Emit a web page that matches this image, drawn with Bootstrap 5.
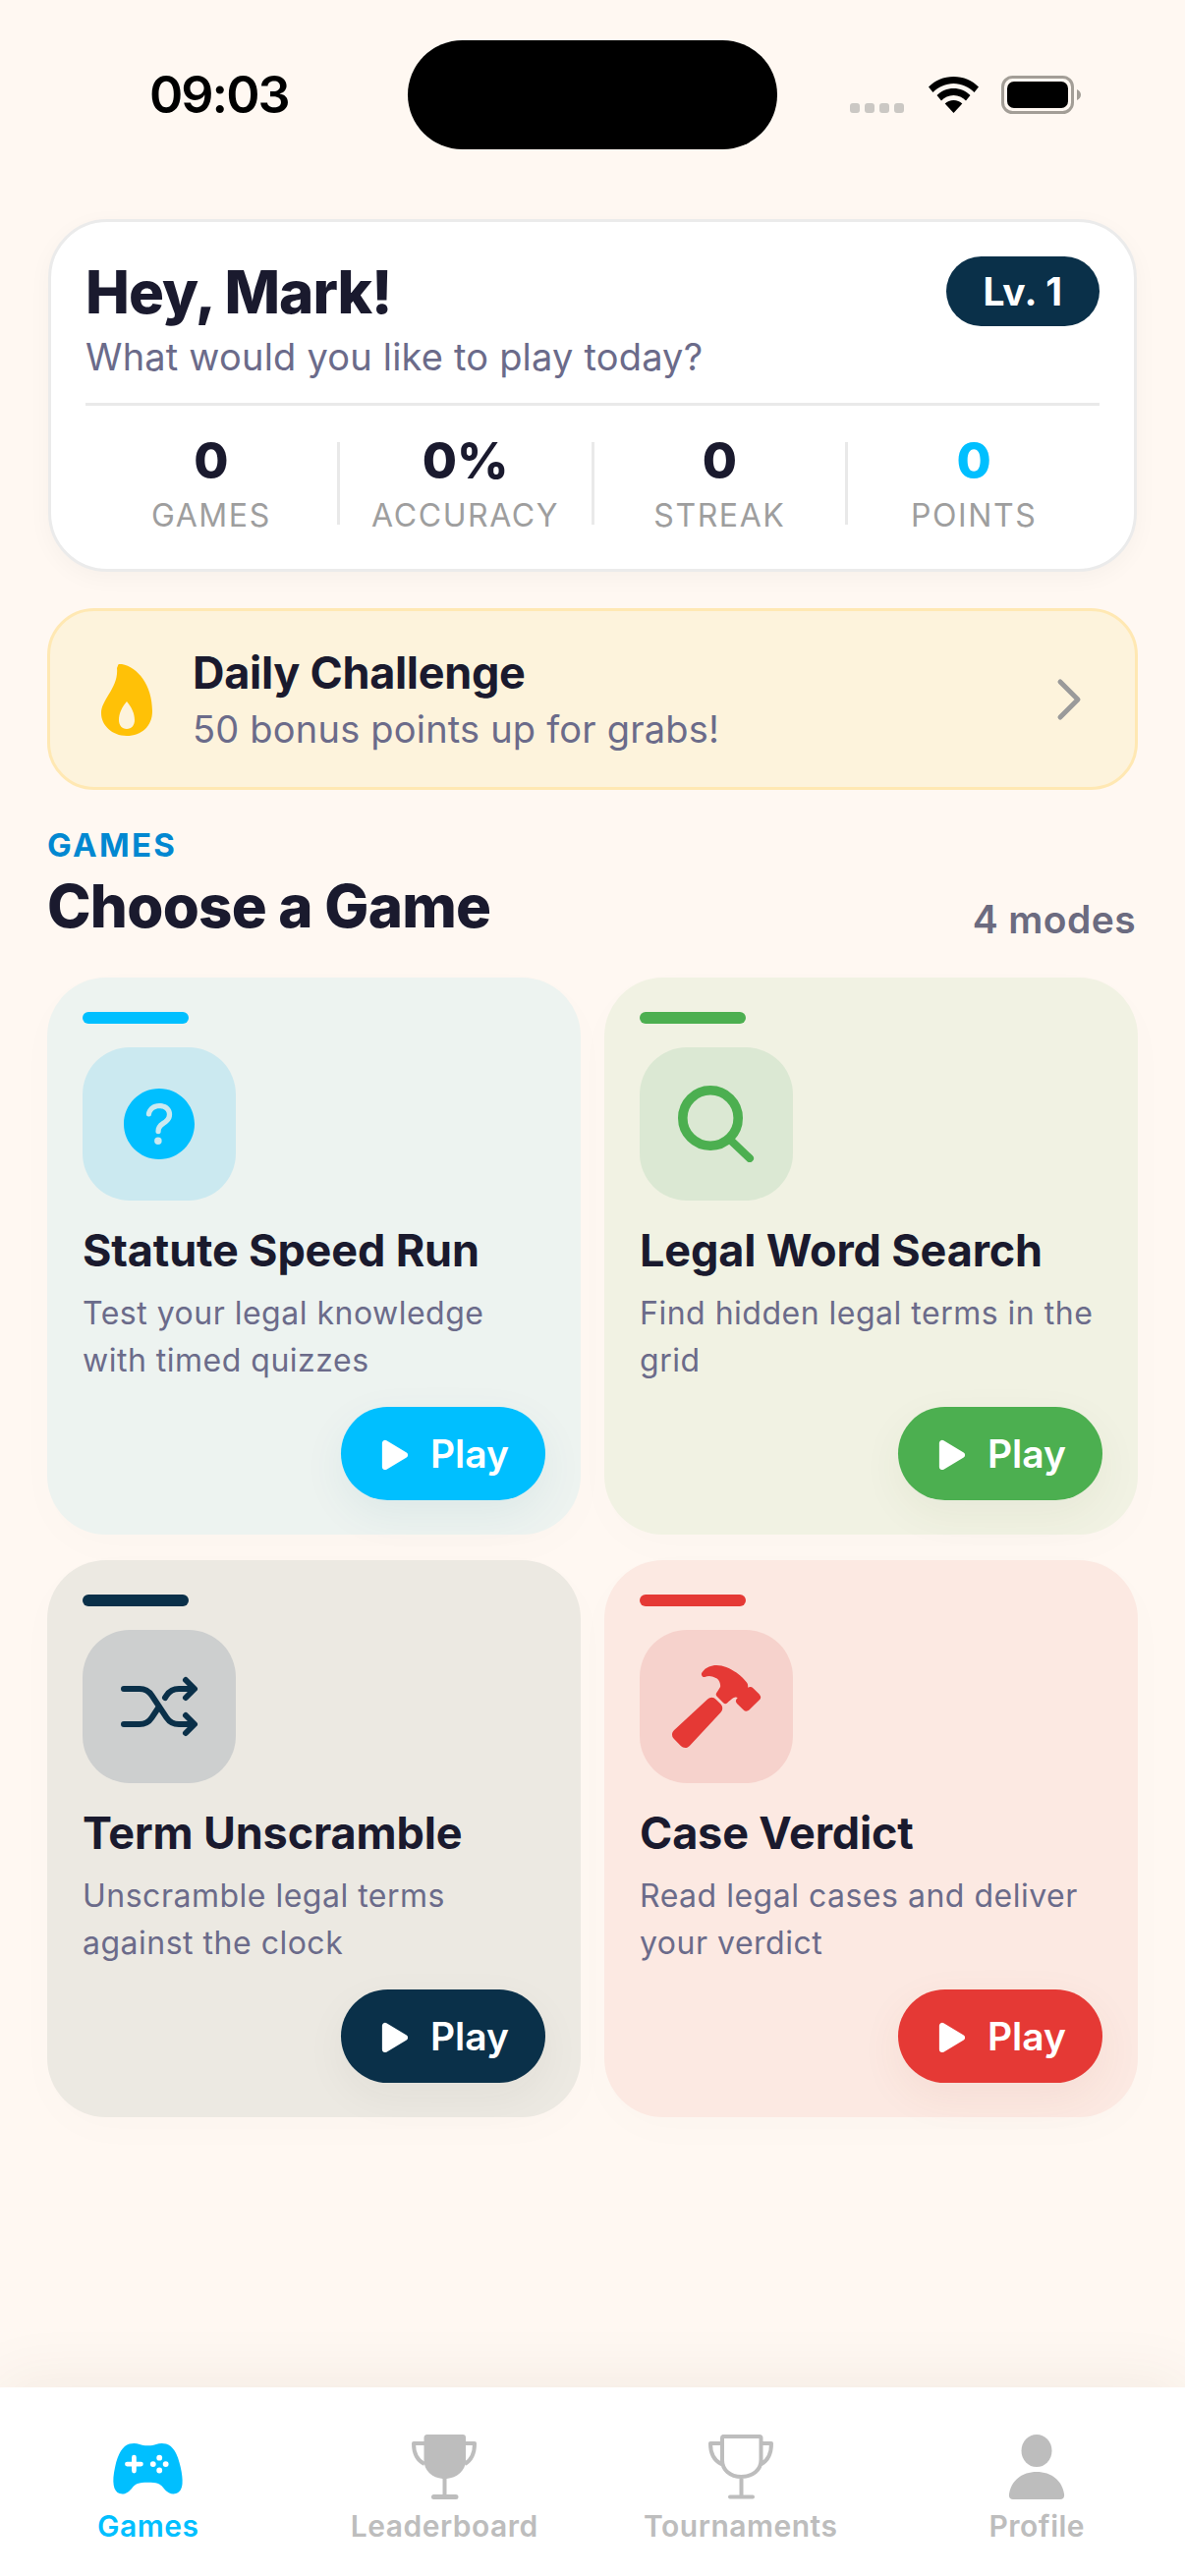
<!DOCTYPE html>
<html lang="en">
<head>
  <meta charset="UTF-8">
  <title>Games</title>
  <meta name="viewport" content="width=device-width, initial-scale=1">
  <link href="https://cdn.jsdelivr.net/npm/bootstrap@5.3.0/dist/css/bootstrap.min.css" rel="stylesheet">
  <style>
    body { background: #fff8f2; font-family: Inter, "Noto Sans", sans-serif; color: #1a1a2e; min-height: 2622px; }

    /* status bar */
    .status-row { height: 223px; padding: 41px 0 0 152px; }
    .status-inner { height: 111px; }
    .clock { width: 263px; font-size: 52px; font-weight: 600; color: #000; line-height: 1; letter-spacing: -2px; }
    .island { width: 376px; height: 111px; background: #000; border-radius: 56px; }
    .sig-dots { margin: 27px 0 0 74px; gap: 5px; }
    .sig-dots span { width: 10px; height: 10px; border-radius: 3px; background: #cbc8c4; }
    .wifi-ic { margin: 0 0 0 25px; }
    .batt-ic { margin: 0 0 0 23px; }

    .page-pad { padding: 0 48px; }

    /* greeting */
    .hello-box { background: #fff; border: 3px solid #ebebeb; border-radius: 60px; margin: 0 1px; padding: 35px 35px 34px; box-shadow: 0 6px 24px rgba(0,0,0,.035); }
    .hello-name { font-size: 60px; line-height: 72px; font-weight: 800; margin: 0; letter-spacing: -1px; }
    .hello-sub { font-size: 38px; line-height: 48px; color: #6b6b8a; margin: 6px 0 0; letter-spacing: .2px; }
    .lvl-pill { background: #0a3049; color: #fff; height: 71px; width: 156px; font-size: 39px; font-weight: 700; line-height: 71px; text-align: center; letter-spacing: .4px; }
    .hello-rule { height: 3px; background: #e9e9e9; margin-top: 23px; }
    .stat-row { margin-top: 26px; }
    .stat-cell { flex: 1 1 0; text-align: center; }
    .stat-num { font-size: 51px; line-height: 60px; font-weight: 800; }
    .stat-lbl { font-size: 32px; line-height: 40px; color: #9e9e9e; letter-spacing: 1.6px; margin-top: 6px; }
    .stat-div { width: 3px; height: 84px; background: #e9e9e9; }
    .tint-sky { color: #00bfff; }

    /* daily challenge */
    .daily-box { background: #fdf3dc; border: 3px solid #ffe8b3; border-radius: 48px; margin-top: 37px; padding: 36px 54px 35px 52px; gap: 41px; }
    .daily-title { font-size: 45px; line-height: 54px; font-weight: 700; letter-spacing: -.3px; }
    .daily-sub { font-size: 38px; line-height: 48px; color: #6b6b8a; margin-top: 6px; letter-spacing: .2px; }

    /* section head */
    .sec-head { margin-top: 36px; margin-bottom: 37px; }
    .sec-tag { font-size: 33px; line-height: 40px; font-weight: 700; color: #0288d1; letter-spacing: 2.3px; }
    .sec-title { font-size: 60px; line-height: 72px; font-weight: 800; margin: 6px 0 0; letter-spacing: -.75px; }
    .sec-count { font-size: 39px; line-height: 48px; font-weight: 600; color: #6b6b80; margin: 0 2px -2px 0; letter-spacing: .4px; }

    /* game cards */
    .game-grid { display: grid; grid-template-columns: 1fr 1fr; column-gap: 24px; row-gap: 26px; }
    .game-box { height: 567px; border: 0; border-radius: 60px; padding: 35px 36px; background: var(--tile); box-shadow: 0 12px 48px rgba(0,0,0,.015); color: #1a1a2e; }
    .game-stripe { width: 108px; height: 12px; border-radius: 6px; background: var(--hue); }
    .game-ic { width: 156px; height: 156px; border-radius: 48px; background: var(--wash); margin-top: 24px; color: var(--hue); }
    .game-name { font-size: 45px; line-height: 54px; font-weight: 700; margin: 24px 0 0; letter-spacing: -.15px; }
    .game-desc { font-size: 32px; line-height: 48px; color: #6b6b8a; margin: 13px 0 0; letter-spacing: .5px; }
    .play-btn { height: 95px; padding: 2px 37px 0 34px; gap: 15px; border: 0; background: var(--hue); color: #fff; font-size: 39px; font-weight: 600; box-shadow: 0 14px 44px var(--halo); }
    .play-btn:hover { background: var(--hue); color: #fff; }
    .g-sky { --hue: #00bfff; --tile: #edf3f0; --wash: #cbe9f0; --halo: rgba(0,100,130,.07); }
    .g-leaf { --hue: #4caf50; --tile: #f1f2e3; --wash: #dbe8d3; --halo: rgba(60,90,30,.06); }
    .g-navy { --hue: #0a3049; --tile: #ece9e2; --wash: #cdcfcf; --halo: rgba(30,30,30,.05); }
    .g-red { --hue: #e53935; --tile: #fce9e2; --wash: #f6d2cc; --halo: rgba(160,70,40,.07); }

    /* tab bar */
    .tab-bar { height: 192px; background: #fff; box-shadow: 0 -6px 60px rgba(90,60,30,.07); }
    .tab-bar .nav-link { padding: 48px 0 0; color: #bdbdbd; font-size: 30px; line-height: 36px; font-weight: 600; letter-spacing: .5px; }
    .tab-bar .nav-link.active { color: #00bfff; }
    .tab-bar svg { display: block; margin: 0 auto 9px; }
  </style>
</head>
<body class="d-flex flex-column">

  <!-- status bar -->
  <div class="status-row">
    <div class="status-inner d-flex align-items-center">
      <div class="clock">09:03</div>
      <div class="island flex-shrink-0"></div>
      <div class="sig-dots d-flex"><span></span><span></span><span></span><span></span></div>
      <svg class="wifi-ic" width="51" height="37" viewBox="0 0 51 37"><path d="M25.5 0C15.5 0 6.5 4 0 10.5l4.5 5.5C10 10.5 17.500 7 25.500 7s15.500 3.500 21 9l4.500-5.500C44.500 4 35.500 0 25.500 0z"/><path d="M25.500 12C19 12 13 14.500 8.500 19l4.500 5.500C16.200 21.300 20.500 19 25.500 19s9.300 2.300 12.500 5.500l4.500-5.500C38 14.500 32 12 25.500 12z"/><path d="M25.500 24c-3.500 0-6.500 1.300-8.800 3.500L25.500 37l8.800-9.500c-2.300-2.200-5.300-3.500-8.800-3.500z"/></svg>
      <svg class="batt-ic" width="81" height="39" viewBox="0 0 81 39"><rect x="1.500" y="1.500" width="71" height="36" rx="10" fill="none" stroke="#a39e97" stroke-width="3"/><rect x="6" y="6" width="62" height="27" rx="7"/><path d="M77 14c2.500 1 4 3 4 5.500S79.500 24 77 25z" fill="#a39e97"/></svg>
    </div>
  </div>

  <main class="page-pad flex-grow-1">

    <!-- greeting -->
    <section class="hello-box">
      <div class="d-flex justify-content-between align-items-start">
        <div>
          <h1 class="hello-name">Hey, Mark!</h1>
          <p class="hello-sub">What would you like to play today?</p>
        </div>
        <span class="lvl-pill rounded-pill">Lv. 1</span>
      </div>
      <div class="hello-rule"></div>
      <div class="stat-row d-flex align-items-center">
        <div class="stat-cell"><div class="stat-num">0</div><div class="stat-lbl">GAMES</div></div>
        <div class="stat-div"></div>
        <div class="stat-cell"><div class="stat-num">0%</div><div class="stat-lbl">ACCURACY</div></div>
        <div class="stat-div"></div>
        <div class="stat-cell"><div class="stat-num">0</div><div class="stat-lbl">STREAK</div></div>
        <div class="stat-div"></div>
        <div class="stat-cell"><div class="stat-num tint-sky">0</div><div class="stat-lbl">POINTS</div></div>
      </div>
    </section>

    <!-- daily challenge -->
    <section class="daily-box d-flex align-items-center">
      <svg width="52" height="73" viewBox="0 0 52 73" class="flex-shrink-0"><path fill="#ffc107" fill-rule="evenodd" d="M17 1.500C17 0 19 -.500 21 0C37 3 52 21 52 48C52 63 41 73 26 73C11 73 0 62 0 50C0 36 18 24 16 4zM26 38C31 44 34 50 34 57C34 62 31 66 26 66C21 66 18 62 18 57C18 50 21 44 26 38z"/></svg>
      <div class="flex-grow-1">
        <div class="daily-title">Daily Challenge</div>
        <div class="daily-sub">50 bonus points up for grabs!</div>
      </div>
      <svg width="26" height="44" viewBox="0 0 26 44"><path d="M4 4l18 18L4 40" fill="none" stroke="#9a9a9a" stroke-width="5" stroke-linecap="round" stroke-linejoin="round"/></svg>
    </section>

    <!-- section head -->
    <div class="sec-head d-flex justify-content-between align-items-end">
      <div>
        <div class="sec-tag">GAMES</div>
        <h2 class="sec-title">Choose a Game</h2>
      </div>
      <div class="sec-count">4 modes</div>
    </div>

    <!-- games -->
    <div class="game-grid">

      <div class="card game-box g-sky">
        <div class="game-stripe"></div>
        <div class="game-ic d-flex align-items-center justify-content-center">
          <svg width="96" height="96" viewBox="0 0 512 512" fill="currentColor"><path d="M256 64C150 64 64 150 64 256s86 192 192 192 192-86 192-192S362 64 256 64zm-6 304a20 20 0 1120-20 20 20 0 01-20 20zm33.44-102C267.23 276.88 265 286.85 265 296a14 14 0 01-28 0c0-21.91 10.08-39.33 30.82-53.26C287.1 229.8 298 221.6 298 203.57c0-12.26-7-21.57-21.49-28.46-3.41-1.62-11-3.2-20.34-3.09-11.72.15-20.82 2.95-27.83 8.59C215.12 191.25 214 202.83 214 203a14 14 0 11-28-1.35c.11-2.43 1.8-24.32 24.77-42.8 11.91-9.58 27.06-14.56 45-14.78 12.7-.15 24.63 2 32.72 5.82C312.7 161.34 326 180.43 326 203.57c0 33.83-22.61 49.02-42.56 62.43z"/></svg>
        </div>
        <h3 class="game-name">Statute Speed Run</h3>
        <p class="game-desc">Test your legal knowledge with timed quizzes</p>
        <div class="mt-auto d-flex justify-content-end">
          <button class="btn rounded-pill play-btn d-flex align-items-center">
            <svg width="42" height="42" viewBox="0 0 512 512" fill="currentColor"><path d="M133 440a35.37 35.37 0 01-17.5-4.67c-12-6.8-19.46-20-19.46-34.33V111c0-14.37 7.46-27.53 19.46-34.33a35.13 35.13 0 0135.77.45l247.85 148.36a36 36 0 010 61l-247.89 148.4A35.500 35.500 0 01133 440z"/></svg>
            Play
          </button>
        </div>
      </div>

      <div class="card game-box g-leaf">
        <div class="game-stripe"></div>
        <div class="game-ic d-flex align-items-center justify-content-center">
          <svg width="78" height="78" viewBox="0 0 78 78" fill="none" stroke="currentColor" stroke-linecap="round"><circle cx="33" cy="33" r="28.200" stroke-width="9.600"/><path d="M53 55l20 19" stroke-width="8"/></svg>
        </div>
        <h3 class="game-name">Legal Word Search</h3>
        <p class="game-desc">Find hidden legal terms in the grid</p>
        <div class="mt-auto d-flex justify-content-end">
          <button class="btn rounded-pill play-btn d-flex align-items-center">
            <svg width="42" height="42" viewBox="0 0 512 512" fill="currentColor"><path d="M133 440a35.37 35.37 0 01-17.5-4.67c-12-6.8-19.46-20-19.46-34.33V111c0-14.37 7.46-27.53 19.46-34.33a35.13 35.13 0 0135.77.45l247.85 148.36a36 36 0 010 61l-247.89 148.4A35.500 35.500 0 01133 440z"/></svg>
            Play
          </button>
        </div>
      </div>

      <div class="card game-box g-navy">
        <div class="game-stripe"></div>
        <div class="game-ic d-flex align-items-center justify-content-center">
          <svg width="96" height="96" viewBox="0 0 512 512" fill="none" stroke="currentColor" stroke-width="32" stroke-linecap="round" stroke-linejoin="round"><path d="M400 304l48 48-48 48M400 112l48 48-48 48M64 352h85.19a80 80 0 0066.56-35.62L256 256M64 160h85.19a80 80 0 0166.56 35.62l80.5 120.76A80 80 0 00362.81 352H416M416 160h-53.19a80 80 0 00-66.56 35.62L288 208"/></svg>
        </div>
        <h3 class="game-name">Term Unscramble</h3>
        <p class="game-desc">Unscramble legal terms against the clock</p>
        <div class="mt-auto d-flex justify-content-end">
          <button class="btn rounded-pill play-btn d-flex align-items-center">
            <svg width="42" height="42" viewBox="0 0 512 512" fill="currentColor"><path d="M133 440a35.37 35.37 0 01-17.5-4.67c-12-6.8-19.46-20-19.46-34.33V111c0-14.37 7.46-27.53 19.46-34.33a35.13 35.13 0 0135.77.45l247.85 148.36a36 36 0 010 61l-247.89 148.4A35.500 35.500 0 01133 440z"/></svg>
            Play
          </button>
        </div>
      </div>

      <div class="card game-box g-red">
        <div class="game-stripe"></div>
        <div class="game-ic d-flex align-items-center justify-content-center">
          <svg width="96" height="96" viewBox="0 0 512 512" fill="currentColor"><path d="M280.16 242.79l-26.11-26.12a32 32 0 00-45.14-.12L27.38 384.08c-6.61 6.23-10.95 14.17-11.35 23.06a32.11 32.11 0 009.21 23.94l39 39.43a.46.46 0 00.07.07A32.29 32.29 0 0087 480h1.18c8.89-.33 16.85-4.5 23.17-11.17l168.7-180.7a32 32 0 00.11-45.34zM490 190l-.31-.31-34.27-33.92a21.46 21.46 0 00-15.28-6.26 21.89 21.89 0 00-12.79 4.14c0-.43.06-.85.09-1.22.45-6.5 1.15-16.32-5.2-25.22a258 258 0 00-24.8-28.74.6.6 0 00-.08-.08c-13.32-13.12-42.31-37.83-86.72-55.94A139.55 139.55 0 00257.56 32C226 32 202 46.24 192.81 54.68a119.92 119.92 0 00-14.18 16.22 16 16 0 0018.65 24.34 74.45 74.45 0 018.58-2.63 63.46 63.46 0 0118.45-1.15c13.19 1.09 28.79 7.64 35.69 13.09 11.7 9.41 17.33 22.09 18.26 41.09.18 3.82-7.72 18.14-20 34.48a16 16 0 001.45 21l34.41 34.41a16 16 0 0022 .62c9.73-8.69 24.55-21.79 29.73-25 7.69-4.73 13.19-5.64 14.7-5.8a19.18 19.18 0 0111.29 2.38 1.24 1.24 0 01-.31.95l-1.82 1.73-.3.28a21.52 21.52 0 00.05 30.54l34.26 33.91a21.45 21.45 0 0015.28 6.25 21.7 21.7 0 0015.22-6.2l55.5-54.82c.19-.19.38-.39.56-.59A21.87 21.87 0 00490 190z"/></svg>
        </div>
        <h3 class="game-name">Case Verdict</h3>
        <p class="game-desc">Read legal cases and deliver your verdict</p>
        <div class="mt-auto d-flex justify-content-end">
          <button class="btn rounded-pill play-btn d-flex align-items-center">
            <svg width="42" height="42" viewBox="0 0 512 512" fill="currentColor"><path d="M133 440a35.37 35.37 0 01-17.5-4.67c-12-6.8-19.46-20-19.46-34.33V111c0-14.37 7.46-27.53 19.46-34.33a35.13 35.13 0 0135.77.45l247.85 148.36a36 36 0 010 61l-247.89 148.4A35.500 35.500 0 01133 440z"/></svg>
            Play
          </button>
        </div>
      </div>

    </div>
  </main>

  <!-- tab bar -->
  <nav class="tab-bar nav nav-justified">
    <a class="nav-link active" href="#">
      <svg width="75" height="66" viewBox="0 19 512 450" fill="currentColor"><path d="M483.13 245.38C461.92 149.49 430 98.31 382.65 84.33A107.13 107.13 0 00352 80c-13.71 0-25.65 3.34-38.28 6.88C298.5 91.15 281.21 96 256 96s-42.51-4.84-57.76-9.11C185.6 83.34 173.69 80 160 80a115.74 115.74 0 00-31.73 4.32c-47.1 13.92-79 65.08-100.52 161C4.61 348.54 16 413.71 59.69 428.83a56.62 56.62 0 0018.64 3.22c29.93 0 53.93-24.93 70.33-45.34 18.53-23.1 40.22-34.82 107.34-34.82 59.95 0 84.76 8.13 106.19 34.82 13.47 16.78 26.2 28.52 38.9 35.91 16.89 9.82 33.77 12 50.16 6.37 25.82-8.81 40.62-32.1 44-69.24 2.57-28.48-1.39-65.89-12.12-114.37zM208 240h-32v32a16 16 0 01-32 0v-32h-32a16 16 0 010-32h32v-32a16 16 0 0132 0v32h32a16 16 0 010 32zm84 4a20 20 0 1120-20 20 20 0 01-20 20zm44 44a20 20 0 1120-19.95A20 20 0 01336 288zm0-88a20 20 0 1120-20 20 20 0 01-20 20zm44 44a20 20 0 1120-20 20 20 0 01-20 20z"/></svg>
      Games
    </a>
    <a class="nav-link" href="#">
      <svg width="66" height="66" viewBox="0 0 66 66"><path fill="currentColor" d="M15 0H52a3 3 0 013 3V26C55 37 46 44 35.500 45V61H45a2.500 2.500 0 010 5H22.500a2.500 2.500 0 010-5H31.500V45C21 44 12.500 37 12.500 26V3a3 3 0 012.500-3z"/><path fill="none" stroke="currentColor" stroke-width="4" stroke-linejoin="round" d="M13 9H2C2 19 5 26 13 30M54 9H64C64 19 61 26 54 30"/></svg>
      Leaderboard
    </a>
    <a class="nav-link" href="#">
      <svg width="66" height="66" viewBox="0 0 66 66" fill="none" stroke="currentColor" stroke-width="4" stroke-linejoin="round" stroke-linecap="round"><path d="M15 2H52a1.500 1.500 0 011.500 1.500V26C53.500 36 45 43 33.500 43S14 36 14 26V3.500A1.500 1.500 0 0115 2zM33.500 43V63.500M22 63.500H45M13 9H2C2 19 5 26 13 30M54 9H64C64 19 61 26 54 30"/></svg>
      Tournaments
    </a>
    <a class="nav-link" href="#">
      <svg width="66" height="66" viewBox="0 0 66 66" fill="currentColor"><ellipse cx="33" cy="16.500" rx="15.500" ry="16.500"/><path d="M5 60.500C7 47 18 38 33 38C48 38 59 47 61 60.500C61.500 64 60 66 57 66H9C6 66 4.500 64 5 60.500z"/></svg>
      Profile
    </a>
  </nav>

  <script src="https://cdn.jsdelivr.net/npm/bootstrap@5.3.0/dist/js/bootstrap.bundle.min.js"></script>
</body>
</html>
